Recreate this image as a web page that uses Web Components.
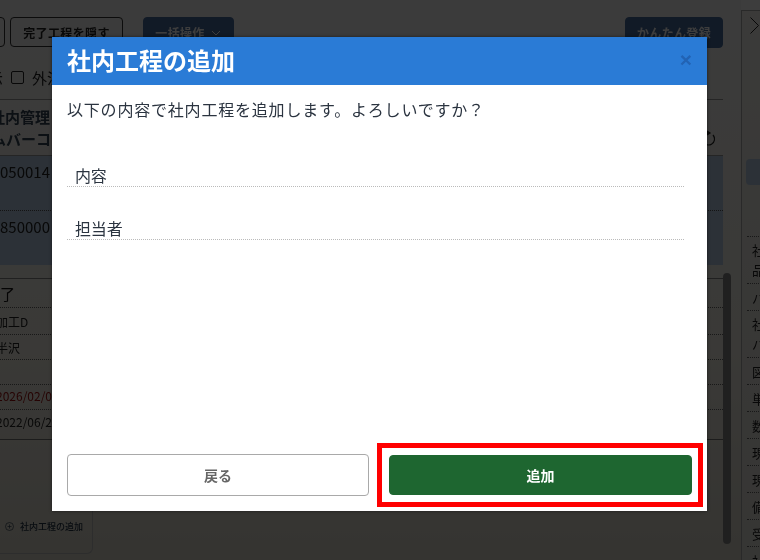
<!DOCTYPE html>
<html lang="ja">
<head>
<meta charset="utf-8">
<title>社内工程の追加</title>
<style>
  html, body { margin: 0; height: 100%; overflow: hidden; }
  body { font-family: "Noto Sans CJK JP", "Noto Sans", sans-serif; color: #222; }
</style>
</head>
<body>
<work-page>
  <div slot="toolbar-left">
    <tool-button style="width:36px;margin-left:-31px"></tool-button>
    <tool-button style="width:113px">完了工程を隠す</tool-button>
    <tool-button dark style="width:91px;margin-left:15px">一括操作 <svg width="12" height="12" viewBox="0 0 12 12" fill="none" stroke="currentColor"><path d="M2 4l4 4 4-4"/></svg></tool-button>
  </div>
  <tool-button slot="toolbar-right" dark style="width:98px">かんたん登録</tool-button>
</work-page>
<side-panel></side-panel>
<modal-dialog heading="社内工程の追加">
  <p>以下の内容で社内工程を追加します。よろしいですか？</p>
  <field-row label="内容"></field-row>
  <field-row label="担当者"></field-row>
  <action-button slot="footer">戻る</action-button>
  <action-button slot="footer" primary marked>追加</action-button>
</modal-dialog>

<script>
// tiny helper so every element does not repeat the attachShadow lines
class ShadowBase extends HTMLElement {
  connectedCallback() {
    if (this.shadowRoot) return;
    this.attachShadow({ mode: 'open' }).innerHTML = this.render();
  }
}

class ToolButton extends ShadowBase {
  render() {
    return `<style>
      :host { display: inline-flex; align-items: center; justify-content: center; gap: 5px; height: 30px;
        box-sizing: border-box; border: 1px solid #333; border-radius: 4px; font-size: 12px; font-weight: 700;
        color: #222; letter-spacing: .03em; flex: none; }
      :host([dark]) { background: #476c9e; border-color: #476c9e; color: #fff; height: 31px; }
    </style><slot></slot>`;
  }
}
customElements.define('tool-button', ToolButton);

class WorkPage extends ShadowBase {
  render() {
    return `<style>
      :host { display: block; position: relative; width: 741px; height: 560px; overflow: hidden;
        background: linear-gradient(#f6f6f6, #f2efe6 60%, #dcd8cc); filter: blur(.6px); }
      .bar { display: flex; justify-content: space-between; align-items: flex-start; padding: 17px 18px 0 0; height: 31px; }
      ::slotted([slot=toolbar-left]) { display: flex; gap: 5px; align-items: flex-start; }
      .filter { display: flex; align-items: center; gap: 8px; height: 51px; padding-top: 8px; box-sizing: border-box; font-size: 15px; color: #222; }
      .filter .cut { margin-left: -12px; }
      .check { width: 11px; height: 11px; border: 1px solid #222; border-radius: 2px; }
      .head { width: 723px; height: 57px; border-top: 1px solid #999; border-bottom: 1px solid #999; box-sizing: border-box;
        font-size: 15px; font-weight: 700; color: #345; line-height: 22px; padding: 6px 0 0; white-space: nowrap; position: relative; }
      .head span { display: block; margin-left: -10px; }
      .head span + span { margin-left: -9px; }
      .reload { position: absolute; right: 8px; top: 30px; }
      .row { width: 723px; height: 54px; background: #b7cde4; font-size: 15px; color: #222; padding: 5px 0 0; box-sizing: border-box; }
      .row + .row { height: 55px; border-top: 1px dotted #555; }
      .list { width: 723px; margin-top: 13px; border-top: 1px solid #888; }
      .list div { height: 25px; box-sizing: border-box; border-bottom: 1px dotted #666; font-size: 12px; color: #222; line-height: 25px; white-space: nowrap; padding: 0; }
      .list span { margin-left: -4px; }
      .list .big { height: 29px; font-size: 15px; line-height: 29px; color: #111; }
      .list .big span { margin-left: -15px; }
      .list .tall { height: 27px; line-height: 27px; }
      .list .late { color: #9c0c0c; line-height: 22px; }
      .list .last { border-bottom: 1px solid #777; height: 30px; line-height: 24px; }
      .bar-y { position: absolute; left: 723px; top: 273px; width: 8px; height: 271px; background: #888; border-radius: 4px; }
      .card { width: 93px; height: 58px; margin-top: 56px; box-sizing: border-box;
        border-right: 1px solid #bbb; border-bottom: 1px solid #bbb; border-radius: 0 0 6px 0; font-size: 9px; font-weight: 500; color: #234;
        display: flex; align-items: center; gap: 6px; padding: 4px 0 0 5px; white-space: nowrap; }
    </style>
    <div class="bar"><slot name="toolbar-left"></slot><slot name="toolbar-right"></slot></div>
    <div class="filter"><span class="cut">示</span><span class="check"></span><span>外注</span></div>
    <div class="head"><span>社内管理</span><span>ムバーコード</span>
      <svg class="reload" width="14" height="16" viewBox="0 0 14 16" fill="none" stroke="#222" stroke-width="1.2"><path d="M12 5a6 6 0 1 1-5-2"/><path d="M6 1l3 2-3 2" fill="#222"/></svg>
    </div>
    <div class="row">050014</div>
    <div class="row">850000</div>
    <div class="list">
      <div class="big"><span>完了</span></div>
      <div class="tall"><span>加工D</span></div>
      <div><span>半沢</span></div>
      <div></div>
      <div class="late"><span>2026/02/05</span></div>
      <div class="last"><span>2022/06/20</span></div>
    </div>
    <div class="card">
      <svg width="9" height="9" viewBox="0 0 9 9" fill="none" stroke="#345" stroke-width=".7"><circle cx="4.5" cy="4.5" r="4"/><path d="M2.5 4.5h4M4.5 2.5v4"/></svg>
      <span>社内工程の追加</span>
    </div>
    <div class="bar-y"></div>`;
  }
}
customElements.define('work-page', WorkPage);

class SidePanel extends ShadowBase {
  render() {
    const rows = [['社内', '品番'], ['バーコード'], ['社内', 'バーコード'], ['図面'], ['単価'], ['数量'], ['現在'], ['現場'], ['備考'], ['受注'], ['社内']];
    return `<style>
      :host { position: fixed; left: 741px; top: 10px; width: 19px; height: 550px; background: linear-gradient(#f4f3ee, #e2e0d8);
        border-left: 1px solid #aaa; border-top: 1px solid #aaa; box-sizing: border-box; font-size: 13px; color: #222; overflow: hidden; filter: blur(.6px); }
      svg { display: block; margin: 6px 0 0 8px; }
      .btn { width: 40px; height: 26px; margin: 125px 0 0 4px; border-radius: 4px; background: #b7cde4; }
      ul { list-style: none; margin: 51px 0 0 5px; padding: 0; width: 60px; }
      li { height: 27px; box-sizing: border-box; line-height: 27px; border-top: 1px dotted #666; padding-left: 5px; white-space: nowrap; }
      li.two { height: 47px; line-height: 20px; padding-top: 3px; }
      li span { display: block; }
    </style>
    <svg width="9" height="17" viewBox="0 0 9 17" fill="none" stroke="#222"><path d="M.5 .5l8 8-8 8"/></svg>
    <div class="btn"></div>
    <ul>${rows.map((r) => `<li class="${r.length > 1 ? 'two' : ''}">${r.map((t) => `<span>${t}</span>`).join('')}</li>`).join('')}</ul>`;
  }
}
customElements.define('side-panel', SidePanel);

class FieldRow extends ShadowBase {
  render() {
    return `<style>
      :host { display: block; height: 53px; font-size: 16px; color: #2b3440; }
      .line { display: block; height: 24px; box-sizing: border-box; line-height: 24px; padding-left: 8px; border-bottom: 1px dotted #bbb; letter-spacing: -.01em; }
    </style><span class="line">${this.getAttribute('label')}</span>`;
  }
}
customElements.define('field-row', FieldRow);

class ActionButton extends ShadowBase {
  render() {
    return `<style>
      :host { display: flex; align-items: center; justify-content: center; position: relative; box-sizing: border-box;
        width: 302px; height: 42px; border: 1px solid #a9a9a9; border-radius: 4px; background: #fff; color: #666;
        font-size: 14px; font-weight: 700; }
      :host([primary]) { width: 303px; height: 40px; background: #1e6630; border-color: #1e6630; color: #fff; }
      .mark { position: absolute; inset: -13px -12px -13px -13px; border: 5px solid #f00; }
    </style><slot></slot>${this.hasAttribute('marked') ? '<span class="mark"></span>' : ''}`;
  }
}
customElements.define('action-button', ActionButton);

class ModalDialog extends ShadowBase {
  render() {
    return `<style>
      :host { position: fixed; inset: 0; display: block; background: rgba(0,0,0,.76); }
      .box { position: absolute; left: 52px; top: 37px; width: 655px; height: 474px; background: #fff;
        display: flex; flex-direction: column; box-shadow: 0 0 3px rgba(0,0,0,.5); }
      header { display: flex; align-items: center; justify-content: space-between; flex: none; height: 48px; padding: 0 15px 4px 15px;
        background: #2a7bd6; color: #fff; font-size: 24px; font-weight: 700; box-sizing: border-box; }
      .close { color: #2263b4; font-size: 21px; font-weight: 700; line-height: 1; font-family: "Liberation Sans", sans-serif; }
      main { flex: 1; padding: 0 23px 0 15px; font-size: 16px; color: #2b3440; letter-spacing: .05em; }
      ::slotted(p) { margin: 12px 0 42px; line-height: 24px; }
      ::slotted(field-row) { letter-spacing: 0; }
      footer { display: flex; gap: 20px; align-items: center; flex: none; padding: 0 15px 15px; }
    </style>
    <div class="box">
      <header><span>${this.getAttribute('heading')}</span><span class="close">×</span></header>
      <main><slot></slot></main>
      <footer><slot name="footer"></slot></footer>
    </div>`;
  }
}
customElements.define('modal-dialog', ModalDialog);
</script>
</body>
</html>
